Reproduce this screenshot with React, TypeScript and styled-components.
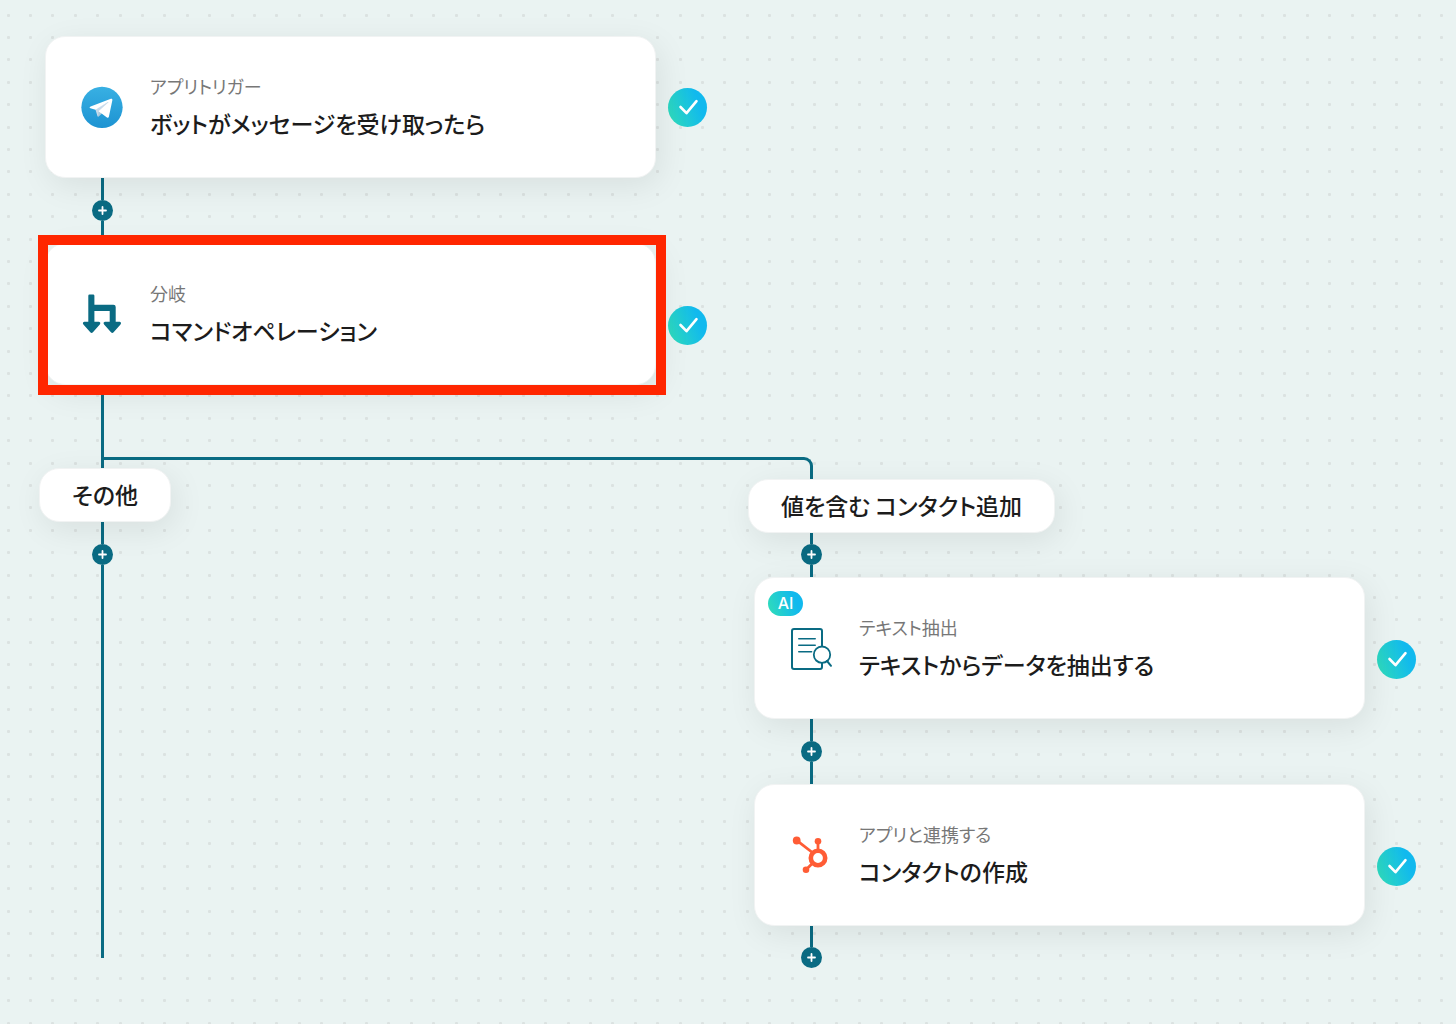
import React from "react";
import styled, { createGlobalStyle } from "styled-components";

const teal = "#0a6b83";
const brandGradient = "linear-gradient(70deg, #2fdcbb 5%, #11b9ee 75%)";

/* Dotted canvas: a 112px tile that carries five by five dots. */
const dotOffsets = [0, 22, 44, 67, 89];
const dots = dotOffsets
  .flatMap((y) =>
    dotOffsets.map(
      (x) => `<rect x="${x + 7}" y="${y + 14}" width="3" height="3" rx="1" fill="#dbe2e1"/>`
    )
  )
  .join("");
const dotTile = `url("data:image/svg+xml,${encodeURIComponent(
  `<svg xmlns="http://www.w3.org/2000/svg" width="112" height="112">${dots}</svg>`
)}")`;

const GlobalStyle = createGlobalStyle`
  * { box-sizing: border-box; }
  body {
    margin: 0;
    background: #eaf3f2;
    color: #222;
    font-family: "Noto Sans CJK JP", "Noto Sans", sans-serif;
    font-feature-settings: "palt";
  }
`;

const Canvas = styled.main`
  min-height: 100vh;
  padding: 36px 40px 56px 45px;
  background-image: ${dotTile};
`;

const Step = styled.div`
  display: flex;
  align-items: center;
  gap: 12px;
`;

const Card = styled.article`
  position: relative;
  display: flex;
  align-items: center;
  gap: 27px;
  flex: none;
  width: 611px;
  height: 142px;
  padding: 0 35px;
  background: #fff;
  border: 1px solid #f1f3f3;
  border-radius: 20px;
  box-shadow: 4px 8px 32px rgba(0, 0, 0, 0.08);

  > svg {
    flex: none;
    overflow: visible;
  }
`;

const Highlight = styled.span`
  position: absolute;
  inset: -9px -11px -11px -8px;
  border: 10px solid #ff2600;
  pointer-events: none;
`;

const AiTag = styled.span`
  position: absolute;
  top: 13px;
  left: 13px;
  width: 35px;
  height: 25px;
  border-radius: 13px;
  background: ${brandGradient};
  color: #fff;
  font: 500 16px/25px Inter, sans-serif;
  text-align: center;
`;

const Labels = styled.div`
  padding-bottom: 2px;
`;

const Kind = styled.p`
  margin: 0;
  color: #777;
  font-size: 18px;
  font-weight: 400;
  line-height: 34px;
`;

const Title = styled.h2`
  margin: 0;
  color: #1c1c1c;
  font-size: 23px;
  font-weight: 500;
  line-height: 40px;
`;

const Status = styled.span<{ $low?: boolean }>`
  display: grid;
  flex: none;
  width: 39px;
  height: 39px;
  margin-top: ${(p) => (p.$low ? 22 : 0)}px;
  border-radius: 50%;
  background: ${brandGradient};
`;

const Rail = styled.div<{ $grow?: boolean }>`
  display: flex;
  flex-direction: column;
  align-items: center;
  flex: ${(p) => (p.$grow ? 1 : "none")};
  width: 21px;
  margin-left: 47px;
  margin-bottom: ${(p) => (p.$grow ? 10 : 0)}px;
`;

const Line = styled.span<{ $length?: number }>`
  width: 3px;
  flex: ${(p) => (p.$length ? `0 0 ${p.$length}px` : "1")};
  background: ${teal};
`;

const AddButton = styled.button`
  display: grid;
  flex: none;
  place-items: center;
  width: 21px;
  height: 21px;
  padding: 0;
  border: 0;
  border-radius: 50%;
  background: ${teal};
  cursor: pointer;
`;

const Branches = styled.section`
  display: grid;
  grid-template-columns: 709px auto;
  justify-content: start;
`;

const Branch = styled.section`
  display: flex;
  flex-direction: column;
  align-items: flex-start;
`;

const ForkStart = styled.span`
  align-self: stretch;
  height: 11px;
  margin-left: 56px;
  border-top: 3px solid ${teal};
  border-left: 3px solid ${teal};
`;

const ForkEnd = styled.span`
  width: 59px;
  height: 22px;
  border-top: 3px solid ${teal};
  border-right: 3px solid ${teal};
  border-top-right-radius: 9px;
`;

const Condition = styled.h3`
  position: relative;
  margin: 0 0 0 -6px;
  padding: 0 32px 2px;
  background: #fff;
  border: 1px solid #f1f3f3;
  border-radius: 20px;
  box-shadow: 4px 8px 32px rgba(0, 0, 0, 0.08);
  color: #1c1c1c;
  font-size: 23px;
  font-weight: 500;
  line-height: 50px;
  white-space: nowrap;
`;

const TelegramIcon = () => (
  <svg width="42" height="42" viewBox="0 0 240 240" aria-hidden="true">
    <defs>
      <linearGradient id="telegram" x1="0" y1="0" x2="0" y2="1">
        <stop offset="0" stopColor="#38b0e3" />
        <stop offset="1" stopColor="#1d93d2" />
      </linearGradient>
    </defs>
    <circle cx="120" cy="122" r="118" fill="url(#telegram)" />
    <path fill="#c8daea" d="M98 175c-3.888 0-3.227-1.468-4.568-5.17L82 132.207 170 80" />
    <path fill="#a9c9dd" d="M98 175c3 0 4.325-1.372 6-3l16-15.558-19.958-12.035" />
    <path
      fill="#fff"
      d="M100.04 144.41l48.36 35.729c5.519 3.045 9.501 1.468 10.876-5.123l19.685-92.763c2.015-8.08-3.08-11.746-8.36-9.349l-115.59 44.571c-7.89 3.165-7.843 7.567-1.438 9.528l29.663 9.259 68.673-43.325c3.242-1.966 6.218-.91 3.776 1.258"
    />
  </svg>
);

const BranchIcon = () => (
  <svg width="42" height="42" viewBox="0 0 42 42" fill={teal} aria-hidden="true">
    <path d="M8.5 1.5h3.6q1.3 0 1.3 1.3v9h19q2.3 0 2.3 2.3v14.7h4q2.2.8.8 2.6l-6.9 7.9q-1.3 1.3-2.6 0l-6.9-7.9q-1.4-1.8.8-2.6h4.8V18H13.4v10.8h4.6q2.2.8.8 2.6l-6.9 7.9q-1.3 1.3-2.6 0l-6.9-7.9q-1.4-1.8.8-2.6h4.1v-26q0-1.3 1.2-1.3z" />
  </svg>
);

const ExtractIcon = () => (
  <svg
    width="42"
    height="42"
    viewBox="0 0 42 42"
    fill="none"
    stroke={teal}
    strokeWidth="2"
    strokeLinecap="round"
    aria-hidden="true"
  >
    <path d="M32 19.5V4q0-2-2-2H4Q2 2 2 4v36q0 2 2 2h26q2 0 2-2v-4" />
    <path strokeWidth="1.6" d="M8.8 11.8h16.4M8.8 18.3h16.4M8.8 24.8h12.8" />
    <circle cx="32" cy="27.7" r="8.2" fill="#fff" strokeWidth="1.8" />
    <path d="M37 34l4 4.8" />
  </svg>
);

const HubIcon = () => (
  <svg width="42" height="42" viewBox="0 0 42 42" fill="#ff5c35" aria-hidden="true">
    <path d="M6.7 6.3L23 19M28 7v10M16 35.7l7-7" stroke="#ff5c35" strokeWidth="2.8" />
    <circle cx="6.7" cy="6.5" r="3.9" />
    <circle cx="28" cy="7.3" r="3.3" />
    <circle cx="16" cy="35.7" r="3.3" />
    <circle cx="28" cy="24" r="7.2" fill="#fff" stroke="#ff5c35" strokeWidth="4.6" />
  </svg>
);

const Done = ({ low }: { low?: boolean }) => (
  <Status $low={low} role="img" aria-label="完了">
    <svg width="39" height="39" viewBox="0 0 39 39" fill="none" aria-hidden="true">
      <path
        d="M12.5 19l6 6.2L28.5 13.2"
        stroke="#fff"
        strokeWidth="2.6"
        strokeLinecap="round"
        strokeLinejoin="round"
      />
    </svg>
  </Status>
);

const Add = () => (
  <AddButton type="button" aria-label="ステップを追加">
    <svg width="9" height="9" viewBox="0 0 9 9" aria-hidden="true">
      <path d="M4.5 1v7M1 4.5h7" stroke="#fff" strokeWidth="1.8" strokeLinecap="round" />
    </svg>
  </AddButton>
);

type NodeProps = {
  icon: React.ReactNode;
  kind: string;
  title: string;
  ai?: boolean;
  highlighted?: boolean;
  low?: boolean;
};

const FlowNode = ({ icon, kind, title, ai, highlighted, low }: NodeProps) => (
  <Step>
    <Card>
      {icon}
      <Labels>
        <Kind>{kind}</Kind>
        <Title>{title}</Title>
      </Labels>
      {ai && <AiTag>AI</AiTag>}
      {highlighted && <Highlight />}
    </Card>
    <Done low={low} />
  </Step>
);

export default function App() {
  return (
    <>
      <GlobalStyle />
      <Canvas>
        <FlowNode icon={<TelegramIcon />} kind="アプリトリガー" title="ボットがメッセージを受け取ったら" />
        <Rail>
          <Line $length={22} />
          <Add />
          <Line $length={22} />
        </Rail>
        <FlowNode icon={<BranchIcon />} kind="分岐" title="コマンドオペレーション" highlighted low />
        <Rail>
          <Line $length={72} />
        </Rail>
        <Branches>
          <Branch>
            <ForkStart />
            <Condition>その他</Condition>
            <Rail $grow>
              <Line $length={22} />
              <Add />
              <Line />
            </Rail>
          </Branch>
          <Branch>
            <ForkEnd />
            <Condition>値を含む コンタクト追加</Condition>
            <Rail>
              <Line $length={11} />
              <Add />
              <Line $length={12} />
            </Rail>
            <FlowNode icon={<ExtractIcon />} kind="テキスト抽出" title="テキストからデータを抽出する" ai low />
            <Rail>
              <Line $length={22} />
              <Add />
              <Line $length={22} />
            </Rail>
            <FlowNode icon={<HubIcon />} kind="アプリと連携する" title="コンタクトの作成" low />
            <Rail>
              <Line $length={21} />
              <Add />
            </Rail>
          </Branch>
        </Branches>
      </Canvas>
    </>
  );
}
